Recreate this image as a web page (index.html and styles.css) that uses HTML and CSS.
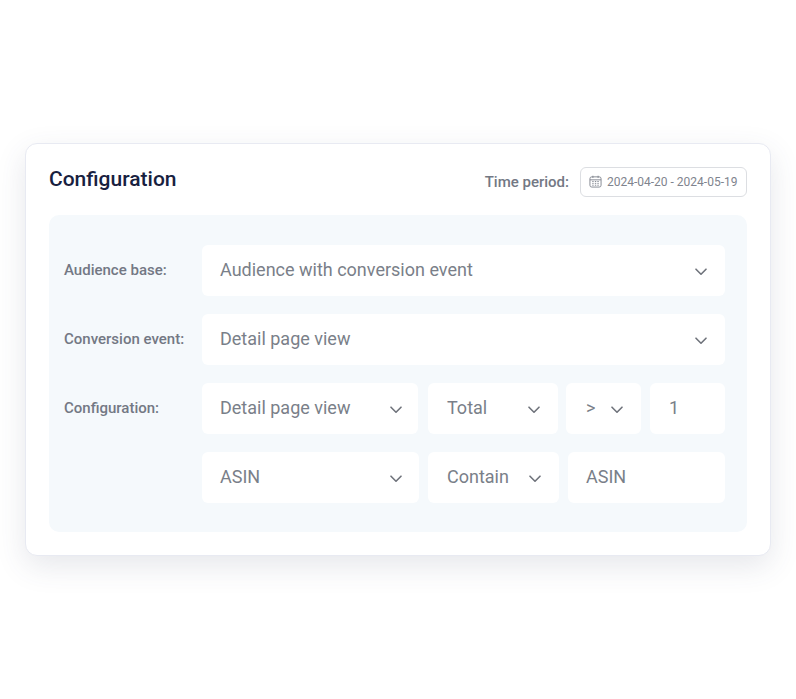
FILE: index.html
```html
<!DOCTYPE html>
<html lang="en">
<head>
    <meta charset="UTF-8">
    <title>Configuration</title>
    <link rel="stylesheet" href="styles.css">
</head>
<body>
    <svg class="icon-defs" width="0" height="0">
        <symbol id="chevron" viewBox="0 0 12 8">
            <path d="M1 1.2 L6 6.2 L11 1.2" fill="none" stroke="currentColor" stroke-width="1.6" stroke-linecap="round" stroke-linejoin="round"/>
        </symbol>
    </svg>
    <div class="card">
        <div class="card-header">
            <h1>Configuration</h1>
            <div class="period">
                <span class="period-label">Time period:</span>
                <div class="date-box">
                    <svg class="calendar" viewBox="0 0 14 14" width="13" height="13">
                        <rect x="1" y="2" width="12" height="11" rx="2" fill="none" stroke="currentColor" stroke-width="1"/>
                        <path d="M1 5.2 H13 M4.2 .8 V3.2 M9.8 .8 V3.2" fill="none" stroke="currentColor" stroke-width="1"/>
                        <path d="M3.5 7 H5 M6.3 7 H7.8 M9 7 H10.5 M3.5 9 H5 M6.3 9 H7.8 M9 9 H10.5 M3.5 11 H5 M6.3 11 H7.8 M9 11 H10.5" fill="none" stroke="currentColor" stroke-width="1"/>
                    </svg>
                    <span>2024-04-20 - 2024-05-19</span>
                </div>
            </div>
        </div>

        <div class="panel">
            <div class="form-row">
                <label>Audience base:</label>
                <div class="fields">
                    <div class="field select grow">Audience with conversion event<svg class="chevron"><use href="#chevron"/></svg></div>
                </div>
            </div>
            <div class="form-row">
                <label>Conversion event:</label>
                <div class="fields">
                    <div class="field select grow">Detail page view<svg class="chevron"><use href="#chevron"/></svg></div>
                </div>
            </div>
            <div class="form-row row-3">
                <label>Configuration:</label>
                <div class="fields">
                    <div class="field select w-event">Detail page view<svg class="chevron"><use href="#chevron"/></svg></div>
                    <div class="field select w-total">Total<svg class="chevron"><use href="#chevron"/></svg></div>
                    <div class="field select w-op"><span class="op">&gt;</span><svg class="chevron"><use href="#chevron"/></svg></div>
                    <div class="field w-num">1</div>
                </div>
            </div>
            <div class="form-row row-4">
                <label></label>
                <div class="fields">
                    <div class="field select w-asin">ASIN<svg class="chevron"><use href="#chevron"/></svg></div>
                    <div class="field select w-contain">Contain<svg class="chevron"><use href="#chevron"/></svg></div>
                    <div class="field grow">ASIN</div>
                </div>
            </div>
        </div>
    </div>
</body>
</html>
```

FILE: styles.css
```css
body {
    margin: 0;
    min-height: 699px;
    box-sizing: border-box;
    padding: 143px 25px 0 25px;
    background-color: #fff;
    font-family: Roboto, "Liberation Sans", sans-serif;
}

.icon-defs {
    position: absolute;
}

.card {
    height: 413px;
    box-sizing: border-box;
    padding: 0 23px;
    background: #fff;
    border: 1px solid #e8eaf2;
    border-radius: 12px;
    box-shadow: 0 10px 30px rgba(60,70,100,0.13);
}

.card-header {
    display: flex;
    justify-content: space-between;
    align-items: center;
    height: 71px;
}

h1 {
    margin: 0 0 2px;
    color: #18213f;
    font-size: 21px;
    font-weight: 500;
}

.period {
    display: flex;
    align-items: center;
    gap: 11px;
    margin-top: 4px;
}

.period-label {
    color: #737884;
    font-size: 15px;
    font-weight: 500;
}

.date-box {
    display: flex;
    align-items: center;
    gap: 5px;
    box-sizing: border-box;
    width: 167px;
    height: 30px;
    padding-left: 8px;
    border: 1.5px solid #dcdee2;
    border-radius: 6px;
    color: #7f848e;
    font-size: 12px;
    white-space: nowrap;
}

.calendar {
    flex: none;
}

.panel {
    height: 317px;
    box-sizing: border-box;
    padding: 30px 22px 0 15px;
    background-color: #f5f9fc;
    border-radius: 10px;
}

.form-row {
    display: flex;
    align-items: center;
    margin-bottom: 18px;
}

.form-row label {
    flex: none;
    width: 138px;
    padding-bottom: 2px;
    color: #737884;
    font-size: 15px;
    font-weight: 500;
}

.fields {
    flex: 1;
    display: flex;
    gap: 9px;
}

.field {
    display: flex;
    align-items: center;
    justify-content: space-between;
    box-sizing: border-box;
    height: 51px;
    padding: 0 18px 2px 18px;
    background: #fff;
    border-radius: 6px;
    color: #7a7f89;
    font-size: 18px;
    white-space: nowrap;
}

.grow {
    flex: 1;
}

.chevron {
    flex: none;
    width: 12px;
    height: 8px;
    margin-top: 4px;
    color: #6f737b;
}

.w-event {
    width: 216px;
    margin-right: 1px;
    padding-right: 16px;
}

.w-total {
    width: 130px;
    margin-right: -1px;
    padding-left: 19px;
}

.w-op {
    width: 75px;
    padding-left: 20px;
}

.w-num {
    width: 75px;
    padding-left: 19px;
}

.op {
    font-size: 18px;
}

.w-asin {
    width: 217px;
    padding-right: 17px;
}

.w-contain {
    width: 131px;
    padding-left: 19px;
}
```
